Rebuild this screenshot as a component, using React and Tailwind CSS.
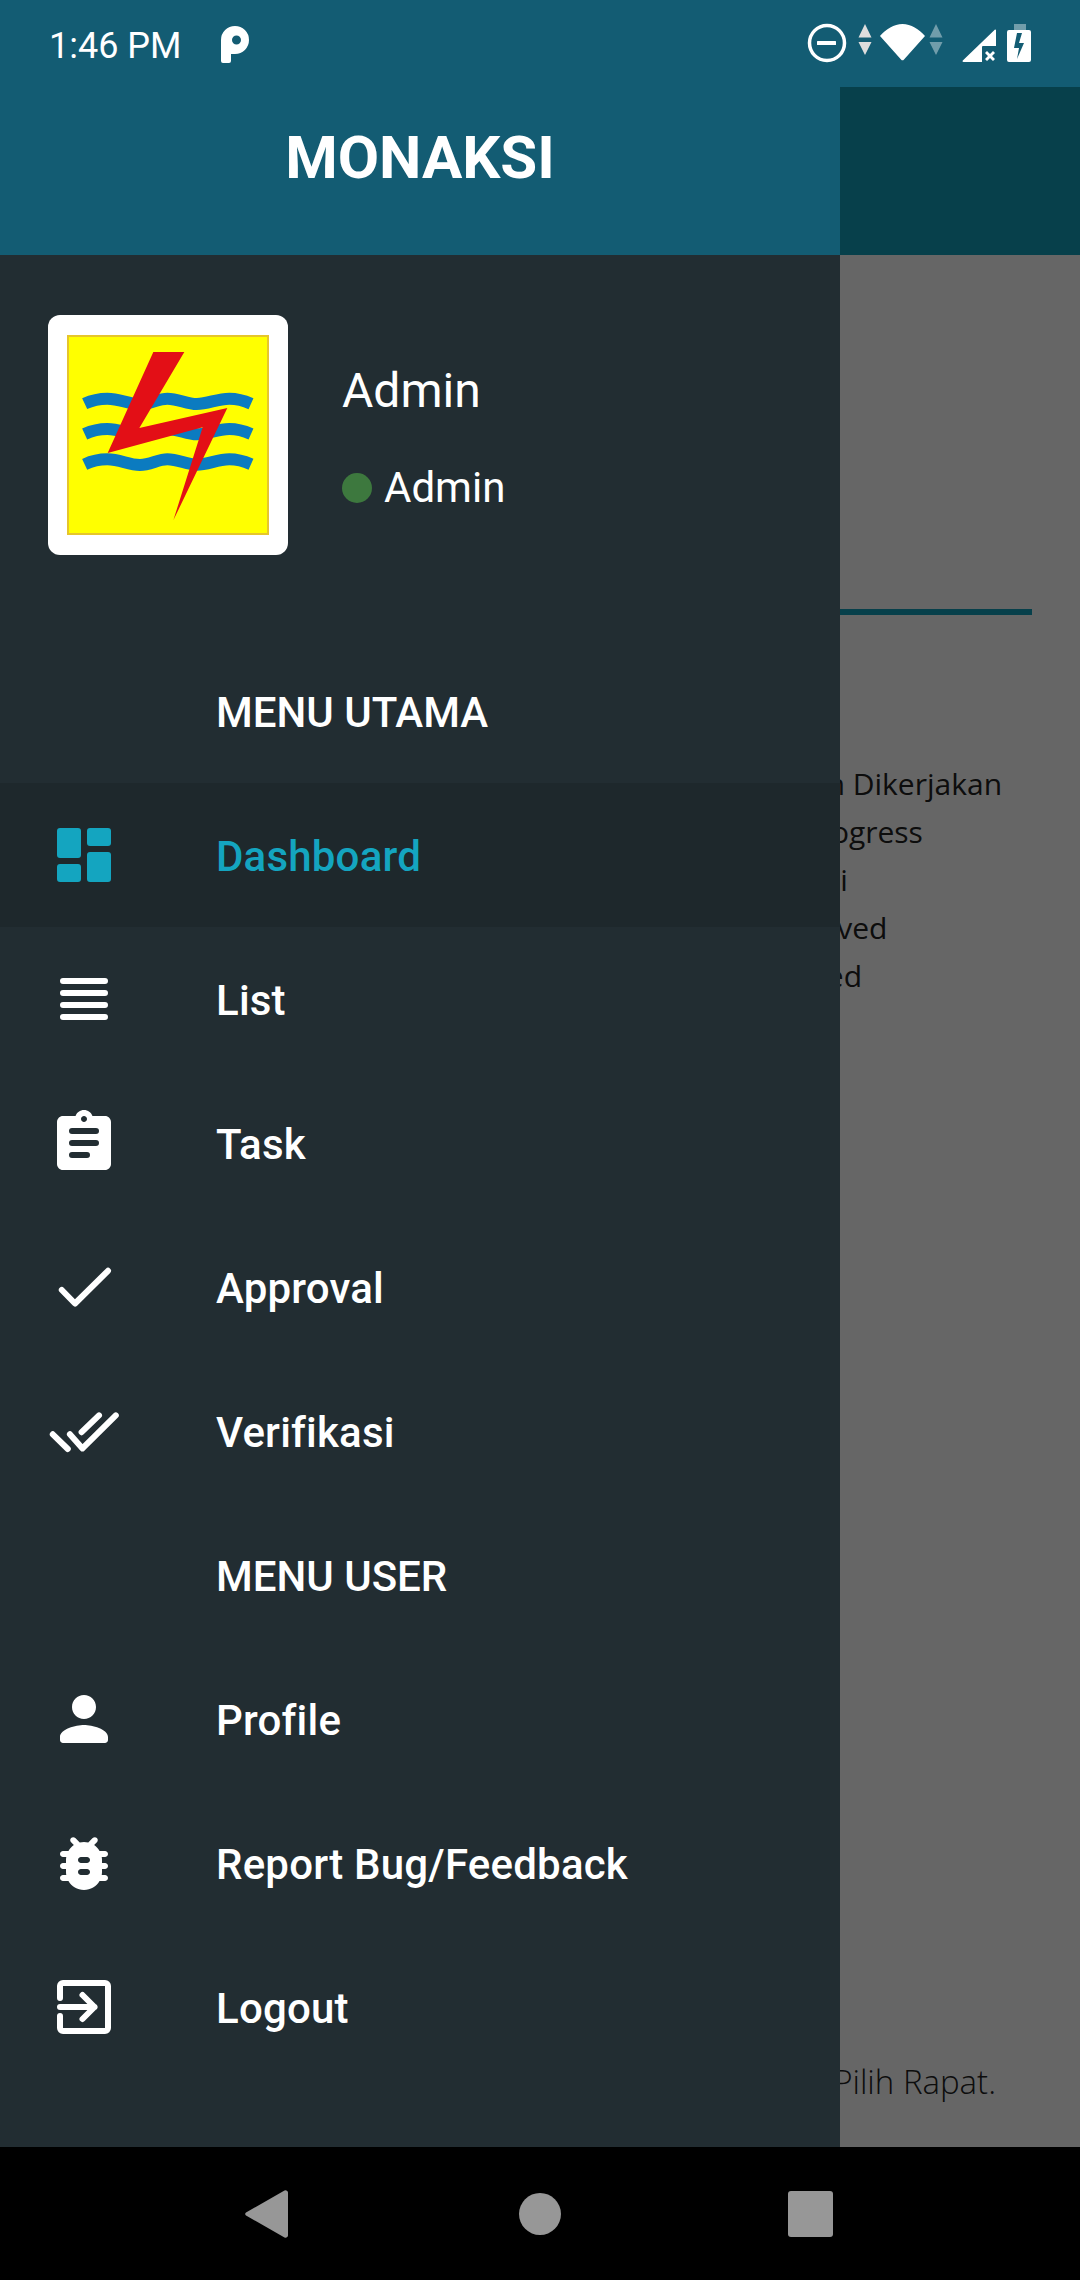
import React from "react";

const roboto = "font-['Roboto',sans-serif]";

function MenuIcon({ name, className = "text-white" }) {
  const paths = {
    list: "M5 5h14a1 1 0 0 1 0 2H5a1 1 0 0 1 0-2zm0 4h14a1 1 0 0 1 0 2H5a1 1 0 0 1 0-2zm0 4h14a1 1 0 0 1 0 2H5a1 1 0 0 1 0-2zm0 4h14a1 1 0 0 1 0 2H5a1 1 0 0 1 0-2z",
    task: "M19 3h-4.18C14.4 1.84 13.3 1 12 1c-1.3 0-2.4.84-2.82 2H5c-1.1 0-2 .9-2 2v14c0 1.1.9 2 2 2h14c1.1 0 2-.9 2-2V5c0-1.1-.9-2-2-2zm-7 0c.55 0 1 .45 1 1s-.45 1-1 1-1-.45-1-1 .45-1 1-1zM8 7a1 1 0 0 0 0 2h8a1 1 0 0 0 0-2H8zm0 4a1 1 0 0 0 0 2h8a1 1 0 0 0 0-2H8zm0 4a1 1 0 0 0 0 2h5a1 1 0 0 0 0-2H8z",
    person: "M12 12c2.21 0 4-1.79 4-4s-1.79-4-4-4-4 1.79-4 4 1.79 4 4 4zm0 2c-2.67 0-8 1.34-8 4v1c0 .55.45 1 1 1h14c.55 0 1-.45 1-1v-1c0-2.66-5.33-4-8-4z",
    bug: "M19 8h-1.81c-.45-.78-1.07-1.45-1.82-1.96l.93-.93c.39-.39.39-1.02 0-1.41-.39-.39-1.02-.39-1.41 0l-1.47 1.47C12.96 5.06 12.49 5 12 5s-.96.06-1.41.17L9.11 3.7c-.39-.39-1.02-.39-1.41 0-.39.39-.39 1.02 0 1.41l.92.93C7.88 6.55 7.26 7.22 6.81 8H5c-.55 0-1 .45-1 1s.45 1 1 1h1.09c-.05.33-.09.66-.09 1v1H5c-.55 0-1 .45-1 1s.45 1 1 1h1v1c0 .34.04.67.09 1H5c-.55 0-1 .45-1 1s.45 1 1 1h1.81c1.04 1.79 2.97 3 5.19 3s4.15-1.21 5.19-3H19c.55 0 1-.45 1-1s-.45-1-1-1h-1.09c.05-.33.09-.66.09-1v-1h1c.55 0 1-.45 1-1s-.45-1-1-1h-1v-1c0-.34-.04-.67-.09-1H19c.55 0 1-.45 1-1s-.45-1-1-1zm-6 8h-2c-.55 0-1-.45-1-1s.45-1 1-1h2c.55 0 1 .45 1 1s-.45 1-1 1zm0-4h-2c-.55 0-1-.45-1-1s.45-1 1-1h2c.55 0 1 .45 1 1s-.45 1-1 1z",
  };

  const strokes = {
    logout: ["M4 9V5a1 1 0 0 1 1-1h14a1 1 0 0 1 1 1v14a1 1 0 0 1-1 1H5a1 1 0 0 1-1-1v-4", "M4 12h11.5M11.500 8l4 4-4 4"],
    check: ["M4.600 13L9 17.500L20 6.600"],
    checks: ["M1.600 13.100L6.600 18", "M7.300 13.100L11.500 17.800L22.600 6.800", "M11.200 12.400L17 6.800"],
  };

  if (name === "dashboard") {
    return (
      <svg viewBox="0 0 24 24" className={`w-[72px] h-[72px] fill-current ${className}`}>
        <rect x="3" y="3" width="8" height="10" rx="1" />
        <rect x="13" y="3" width="8" height="6" rx="1" />
        <rect x="3" y="15" width="8" height="6" rx="1" />
        <rect x="13" y="11" width="8" height="10" rx="1" />
      </svg>
    );
  }

  if (strokes[name]) {
    return (
      <svg viewBox="0 0 24 24" fill="none" stroke="currentColor" strokeWidth="2" strokeLinecap="round" strokeLinejoin="round" className={`w-[72px] h-[72px] ${className}`}>
        {strokes[name].map((d) => (
          <path key={d} d={d} />
        ))}
      </svg>
    );
  }

  return (
    <svg viewBox="0 0 24 24" className={`w-[72px] h-[72px] fill-current ${className}`}>
      <path fillRule="evenodd" d={paths[name]} />
    </svg>
  );
}

function MenuRow({ icon, label, active }) {
  return (
    <div className={`flex items-center h-[144px] pl-[48px] ${active ? "bg-[#1e282c]" : ""}`}>
      <div className="w-[168px] shrink-0">
        {icon && <MenuIcon name={icon} className={active ? "text-[#14a5c0]" : "text-white"} />}
      </div>
      <span className={`text-[42px] font-medium pt-[3px] ${icon ? "tracking-[0.2px]" : ""} ${active ? "text-[#14a5c0]" : "text-white"}`}>{label}</span>
    </div>
  );
}

function PlnLogo() {
  const wave = "M53 201C79 189 99 186 121 186C159 186 184 203 219 203C249 203 274 186 301 186C334 186 359 202 389 202C424 202 449 186 487 186C509 186 534 193 552 201";
  return (
    <div className="w-[202px] h-[200px] bg-[#ffff00] border-2 border-[#e6c52c]">
      <svg viewBox="6 2 594 586" className="w-full h-full">
        <g fill="none" stroke="#0b7bc0" strokeWidth="36">
          <path d={wave} />
          <path d={wave} transform="translate(0 91)" />
          <path d={wave} transform="translate(0 182)" />
        </g>
        <polygon fill="#e30f16" points="259,46 352,46 217,274 481,214 319,551 407,272 122,349" />
      </svg>
    </div>
  );
}

function StatusIcons() {
  return (
    <svg viewBox="0 0 300 87" className="w-[300px] h-[87px] absolute right-0 top-0">
      <circle cx="47" cy="43" r="17.5" fill="none" stroke="#fff" strokeWidth="3.5" />
      <rect x="37" y="41" width="19" height="4" rx="0.5" fill="#fff" />
      <path d="M85 24l6.500 13.500h-13zM78.500 42h13L85 55z" fill="#ddd" />
      <path d="M100 36c6-7 14-12 22.500-12S139 29 145 36l-21 23.500a2 2 0 0 1-3 0z" fill="#fff" />
      <path d="M156 24l6.500 13.500h-13zM149.500 42h13L156 55z" fill="#fff" fillOpacity="0.4" />
      <path d="M215 29.500a.8.8 0 0 1 1 .5v16h-13a1 1 0 0 0-1 1v15h-18.500c-1 0-1.200-.8-.7-1.500z" fill="#fff" />
      <path d="M206 50l3 3 3-3 2 2-3 3 3 3-2 2-3-3-3 3-2-2 3-3-3-3z" fill="#fff" transform="translate(1 1)" />
      <rect x="234" y="24" width="12" height="6" fill="#fff" fillOpacity="0.4" />
      <path fillRule="evenodd" d="M229 30h20a2 2 0 0 1 2 2v28a2 2 0 0 1-2 2h-20a2 2 0 0 1-2-2V32a2 2 0 0 1 2-2zm8 3l-3 15h5l-2 11 7-16h-5l3-10z" fill="#fff" />
    </svg>
  );
}

export default function App() {
  return (
    <div className={`w-[1080px] h-[2280px] flex flex-col overflow-hidden bg-black ${roboto}`}>
      {/* Status bar */}
      <div className="relative h-[87px] shrink-0 bg-[#135c73] flex items-center pl-[49px] pt-[4px]">
        <span className="text-[36px] text-white">1:46 PM</span>
        <svg viewBox="0 0 28 37" className="w-[28px] h-[37px] ml-[39px] -mt-[2px]">
          <path fillRule="evenodd" d="M0 14A14 14 0 1 1 14 28H10v7a2 2 0 0 1-2 2H2a2 2 0 0 1-2-2zM15.500 9.500a4.500 4.500 0 1 0 0 9a4.500 4.500 0 0 0 0-9z" fill="#fff" />
        </svg>
        <StatusIcons />
      </div>

      <div className="relative flex-1 bg-white">
        {/* Page behind the drawer */}
        <div className="h-[168px] bg-[#12a0bc]" />
        <div className="relative font-['Open_Sans',sans-serif] text-[30px] text-[#222] h-[1892px]">
          <div className="absolute left-[762px] top-[505px] flex flex-col leading-[48px]">
            <span className="-ml-[7px]">Belum Dikerjakan</span>
            <span className="ml-[4px]">In Progress</span>
            <span className="ml-[6px]">Revisi</span>
            <span>Resolved</span>
            <span className="ml-[6px]">Closed</span>
          </div>
          <div className="absolute left-[48px] right-[48px] top-[354px] h-[6px] bg-[#12a0bc]" />
          <div className="absolute right-[84px] top-[1802px] text-[33px] font-light">Pilih Rapat.</div>
        </div>

        {/* Scrim */}
        <div className="absolute inset-0 bg-black/60" />

        {/* Drawer */}
        <div className="absolute left-0 top-0 bottom-0 w-[840px] bg-[#222d32] text-white">
          <div className="h-[168px] bg-[#135c73] flex items-center justify-center">
            <h1 className="text-[60px] font-bold pb-[27px]">MONAKSI</h1>
          </div>

          <div className="h-[384px] flex items-start pl-[48px] pt-[60px]">
            <div className="w-[240px] h-[240px] bg-white rounded-[12px] flex items-center justify-center">
              <PlnLogo />
            </div>
            <div className="ml-[54px] pt-[48px]">
              <div className="text-[48px] leading-[56px]">Admin</div>
              <div className="flex items-center mt-[44px]">
                <span className="w-[30px] h-[30px] rounded-full bg-[#3d783e]" />
                <span className="text-[42px] leading-[50px] ml-[12px]">Admin</span>
              </div>
            </div>
          </div>

          <MenuRow label="MENU UTAMA" />
          <MenuRow icon="dashboard" label="Dashboard" active />
          <MenuRow icon="list" label="List" />
          <MenuRow icon="task" label="Task" />
          <MenuRow icon="check" label="Approval" />
          <MenuRow icon="checks" label="Verifikasi" />
          <MenuRow label="MENU USER" />
          <MenuRow icon="person" label="Profile" />
          <MenuRow icon="bug" label="Report Bug/Feedback" />
          <MenuRow icon="logout" label="Logout" />
        </div>
      </div>

      {/* Navigation bar */}
      <div className="h-[133px] shrink-0 bg-black flex items-center pl-[245px]">
        <svg viewBox="0 0 43 48" className="w-[43px] h-[48px] fill-[#979797]">
          <path d="M39.500 0.500a2.500 2.500 0 0 1 3.500 2.500v42a2.500 2.500 0 0 1-3.500 2.500L1 25.500a2 2 0 0 1 0-3z" />
        </svg>
        <div className="w-[42px] h-[42px] rounded-full bg-[#979797] ml-[231px]" />
        <div className="w-[45px] h-[46px] rounded-[3px] bg-[#979797] ml-[227px]" />
      </div>
    </div>
  );
}
